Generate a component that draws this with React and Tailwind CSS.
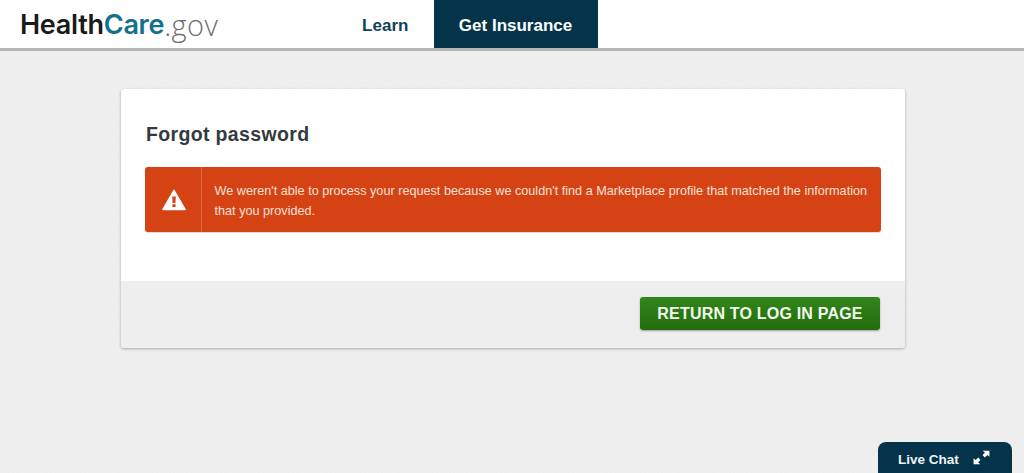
export default function App() {
  const sans = "font-['Liberation_Sans',Arial,sans-serif]";
  return (
    <div className={`relative h-[473px] w-[1024px] overflow-hidden bg-[#eeeeee] bg-[repeating-linear-gradient(45deg,#ededed_0px,#ededed_1px,#efefef_1px,#efefef_3px)] ${sans}`}>
      <header className="flex h-[51px] items-start border-b-[3px] border-[#b5b5b5] bg-white">
        <div className="ml-[20px] flex h-[48px] w-[322px] items-center font-['Inter',sans-serif] text-[27px] leading-none tracking-[-0.28px]">
          <span className="font-semibold text-[#1a1a1a]">Health</span>
          <span className="font-semibold text-[#13708f]">Care</span>
          <span className="font-['Open_Sans',sans-serif] text-[29px] font-light tracking-[0.5px] text-[#6f6f6f]">.gov</span>
        </div>
        <nav className="flex h-[48px] items-center pt-[3px]">
          <a className="ml-[20px] mr-[25px] text-[17px] font-bold tracking-[0.05px] text-[#0f4357]">Learn</a>
          <a className="-mt-[3px] flex h-[48px] w-[164px] items-center justify-center bg-[#05344a] pt-[3px] text-[17px] font-bold text-white">Get Insurance</a>
        </nav>
      </header>
      <main className="ml-[121px] mt-[38px] w-[784px] overflow-hidden rounded-[3px] bg-white shadow-[0_1px_3px_rgba(0,0,0,0.3)]">
        <div className="h-[192px] pl-[24px] pt-[33px]">
          <h1 className="pl-[1px] text-[19.5px] font-bold leading-[24px] tracking-[0.35px] text-[#333a3f]">Forgot password</h1>
          <div className="mt-[21px] flex h-[65px] w-[736px] rounded-[3px] bg-[#d54315] shadow-[0_1px_1px_rgba(0,0,0,0.15)]">
            <div className="flex w-[57px] shrink-0 items-center justify-center border-r border-[#e0673f]">
              <svg className="ml-[2px]" width="24" height="22" viewBox="0 0 24 22" aria-hidden="true">
                <path fillRule="evenodd" fill="#fff" stroke="#fff" strokeWidth="1.5" strokeLinejoin="round" d="M12 1.5 L23 20.5 H1 Z" />
                <path fill="#d54315" d="M10.2 7.5 h3.6 l-.4 6.6 h-2.8 Z M10.4 15.3 h3.2 v2.8 h-3.2 Z" />
              </svg>
            </div>
            <p className="pl-[12.5px] pr-[8px] pt-[13.5px] text-[12.67px] leading-[20px] text-[#f8e0d6]">
              We weren't able to process your request because we couldn't find a Marketplace profile that matched the information that you provided.
            </p>
          </div>
        </div>
        <div className="flex h-[67px] items-start justify-end bg-[#eeeeee] pr-[25px] pt-[16px]">
          <button className="h-[33px] w-[240px] rounded-[3px] bg-gradient-to-b from-[#31861a] to-[#236d0c] pt-[1px] text-[16px] font-bold tracking-[0.2px] text-[#f4f9f0] shadow-[0_1px_2px_rgba(0,0,0,0.35)]">
            RETURN TO LOG IN PAGE
          </button>
        </div>
      </main>
      <div className="absolute bottom-0 left-[878px] flex h-[31px] w-[134px] items-center rounded-t-[8px] bg-[#05344a] pl-[20px] pt-[5px] text-white">
        <span className="text-[13.5px] font-bold text-[#eef3f5]">Live Chat</span>
        <svg className="ml-[14px] -mt-[5px]" width="17" height="15" viewBox="0 0 15 13" aria-hidden="true">
          <path fill="#fff" d="M8.5 0.5 H14.5 V5.8 L12.7 4.2 L10.4 6.4 L8.4 4.4 L10.6 2.2 Z M6.5 12.5 H0.5 V7.2 L2.3 8.8 L4.6 6.6 L6.6 8.6 L4.4 10.8 Z" />
        </svg>
      </div>
    </div>
  );
}
